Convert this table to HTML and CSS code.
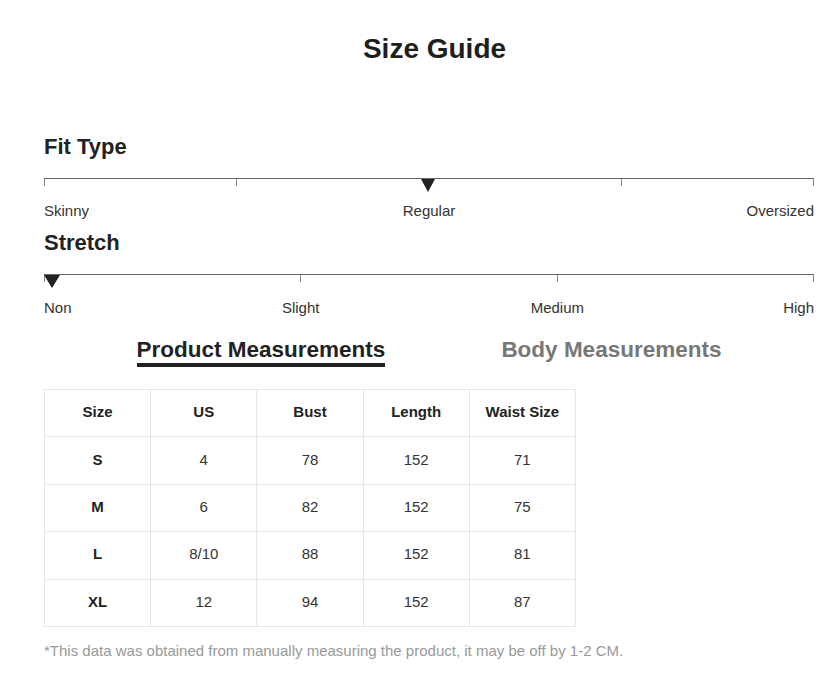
FILE: index.html
```html
<!DOCTYPE html>
<html>
<head>
<meta charset="utf-8">
<link rel="stylesheet" href="styles.css">
</head>
<body>
<div class="page">
  <h1 class="title">Size Guide</h1>

  <h2 class="section-title fit-title">Fit Type</h2>
  <div class="scale scale-4">
    <div class="seg"></div><div class="seg"></div><div class="seg"></div><div class="seg last"></div>
    <span class="marker marker-mid"></span>
  </div>
  <div class="labels labels-4">
    <span class="lab l-start">Skinny</span>
    <span class="lab l-mid-a">Regular</span>
    <span class="lab l-end">Oversized</span>
  </div>

  <h2 class="section-title stretch-title">Stretch</h2>
  <div class="scale scale-3">
    <div class="seg"></div><div class="seg"></div><div class="seg last"></div>
    <span class="marker marker-start"></span>
  </div>
  <div class="labels labels-6">
    <span class="lab l-start">Non</span>
    <span class="lab l-s23">Slight</span>
    <span class="lab l-s45">Medium</span>
    <span class="lab l-end6">High</span>
  </div>

  <div class="tabs">
    <div class="tab active">Product Measurements</div>
    <div class="tab">Body Measurements</div>
  </div>

  <table class="size-table">
    <thead>
      <tr><th>Size</th><th>US</th><th>Bust</th><th>Length</th><th>Waist Size</th></tr>
    </thead>
    <tbody>
      <tr><th>S</th><td>4</td><td>78</td><td>152</td><td>71</td></tr>
      <tr><th>M</th><td>6</td><td>82</td><td>152</td><td>75</td></tr>
      <tr><th>L</th><td>8/10</td><td>88</td><td>152</td><td>81</td></tr>
      <tr><th>XL</th><td>12</td><td>94</td><td>152</td><td>87</td></tr>
    </tbody>
  </table>

  <p class="note">*This data was obtained from manually measuring the product, it may be off by 1-2 CM.</p>
</div>
</body>
</html>
```

FILE: styles.css
```css
html, body {
  margin: 0;
  padding: 0;
  background: #fff;
}
body {
  font-family: "Liberation Sans", Arial, sans-serif;
  color: #222;
}
.page {
  padding: 33px 22px 0 44px;
}
.title {
  margin: 0;
  font-size: 28px;
  line-height: 32px;
  font-weight: 700;
  text-align: center;
  color: #1e1e1e;
  padding-left: 11px;
}
.section-title {
  margin: 0;
  font-size: 22px;
  line-height: 26px;
  font-weight: 700;
  color: #222;
}
.fit-title {
  margin-top: 69px;
}
.stretch-title {
  margin-top: 10px;
}
.scale {
  position: relative;
  display: flex;
  margin-top: 18px;
  border-top: 1px solid #666;
}
.seg {
  flex: 1;
  height: 7px;
  border-left: 1px solid #888;
}
.seg.last {
  border-right: 1px solid #888;
}
.marker {
  position: absolute;
  top: 0;
  width: 0;
  height: 0;
  border-top: 13px solid #222;
}
.marker-mid {
  left: 50%;
  margin-left: -8px;
  border-left: 7px solid transparent;
  border-right: 7px solid transparent;
}
.marker-start {
  left: 0;
  border-left: 8px solid transparent;
  border-right: 8px solid transparent;
}
.labels {
  display: grid;
  margin-top: 16px;
  font-size: 15px;
  line-height: 18px;
  color: #333;
}
.labels-4 {
  grid-template-columns: repeat(4, 1fr);
}
.labels-6 {
  grid-template-columns: repeat(6, 1fr);
  margin-top: 17px;
}
.lab { white-space: nowrap; }
.l-start { grid-column: 1; justify-self: start; }
.l-mid-a { grid-column: 2 / 4; justify-self: center; }
.l-end { grid-column: 4; justify-self: end; }
.l-s23 { grid-column: 2 / 4; justify-self: center; }
.l-s45 { grid-column: 4 / 6; justify-self: center; }
.l-end6 { grid-column: 6; justify-self: end; }

.tabs {
  display: flex;
  justify-content: center;
  gap: 116px;
  margin-top: 20px;
}
.tab {
  font-size: 22.5px;
  line-height: 26px;
  font-weight: 700;
  color: #777;
  border-bottom: 4px solid transparent;
}
.tab.active {
  color: #222;
  border-bottom-color: #222;
}
.size-table {
  margin-top: 22px;
  border-collapse: collapse;
  width: 532px;
  table-layout: fixed;
  font-size: 15px;
  color: #333;
}
.size-table th,
.size-table td {
  border: 1px solid #e6e6e6;
  height: 43.4px;
  padding: 0 0 3px;
  text-align: center;
  vertical-align: middle;
}
.size-table th {
  font-weight: 700;
  color: #222;
}
.note {
  margin: 15px 0 0;
  font-size: 15px;
  line-height: 18px;
  color: #999;
}
```
